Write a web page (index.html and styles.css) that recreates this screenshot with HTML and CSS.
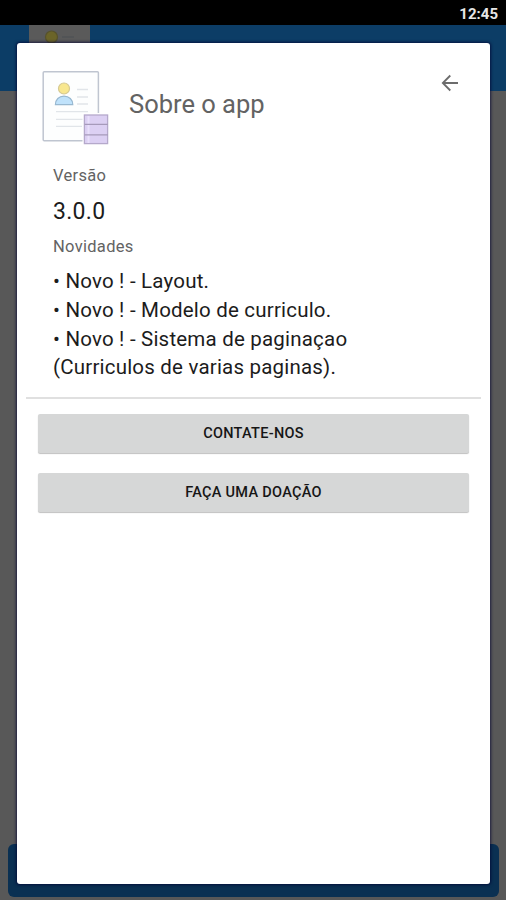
FILE: index.html
```html
<!DOCTYPE html>
<html lang="pt-BR">
    <head>
        <meta charset="utf-8">
        <title>Sobre o app</title>
        <link rel="stylesheet" href="styles.css">
    </head>
    <body>
        <svg class="symbols" width="0" height="0">
            <symbol id="resume" viewBox="0 0 68 76">
                <rect x="1.2" y="1.7" width="55.2" height="69" rx="1" fill="#fdfefe" stroke="#bfc5d0" stroke-width="1.5"/>
                <path d="M35 19.5h11M35 27h11M35 34h11M14 41.7h32M14 49.3h28M14 56.3h26" stroke="#e1e5e9" stroke-width="1.3"/>
                <circle cx="22" cy="18.5" r="5.5" fill="#f8e78f" stroke="#d5c993" stroke-width="1.2"/>
                <path d="M13.4 34.7c0-5 3.5-8.6 8.6-8.6s8.8 3.6 8.8 8.6z" fill="#bfe2fb" stroke="#98b8d0" stroke-width="1.2"/>
                <rect x="40.5" y="43" width="27" height="33" fill="#fff"/>
                <rect x="42.4" y="45" width="23.2" height="28.6" fill="#dcd0f3" stroke="#b5a9cb" stroke-width="1.3"/>
                <path d="M46.5 46v27" stroke="#e9e0fb" stroke-width="2"/>
                <path d="M42.6 54.3h23.2M42.6 64.8h23.2" stroke="#a69aba" stroke-width="1.3"/>
            </symbol>
        </svg>

        <div class="screen">
            <div class="status-bar">12:45</div>
            <header class="app-bar">
                <div class="app-bar-logo">
                    <svg class="app-bar-icon" viewBox="0 0 61 60">
                        <path d="M33 12h12" stroke="#505255" stroke-width="1.3"/>
                        <circle cx="22.5" cy="12" r="6" fill="#6b6428" stroke="#57522c" stroke-width="1.2"/>
                    </svg>
                </div>
            </header>
            <div class="content"></div>
            <footer class="footer"><div class="footer-button"></div></footer>

            <main class="dialog">
                <div class="dialog-header">
                    <svg class="logo"><use href="#resume"/></svg>
                    <h1 class="title">Sobre o app</h1>
                    <svg class="back" viewBox="0 0 18 18">
                        <path d="M17 9H2M9.3 1.5L1.8 9l7.5 7.5" fill="none" stroke="#6c6c6c" stroke-width="1.8"/>
                    </svg>
                </div>
                <div class="info">
                    <p class="label">Versão</p>
                    <p class="version">3.0.0</p>
                    <p class="label label-news">Novidades</p>
                    <p class="news">• Novo ! - Layout.<br>• Novo ! - Modelo de curriculo.<br>• Novo ! - Sistema de paginaçao<br>(Curriculos de varias paginas).</p>
                </div>
                <div class="actions">
                    <button class="button">CONTATE-NOS</button>
                    <button class="button">FAÇA UMA DOAÇÃO</button>
                </div>
            </main>
        </div>
    </body>
</html>
```

FILE: styles.css
```css
* {
    box-sizing: border-box;
}

body {
    margin: 0;
    font-family: Roboto, sans-serif;
}

h1, p {
    margin: 0;
    font-weight: normal;
    white-space: nowrap;
}

.symbols {
    position: absolute;
}

/* Screen behind the dialog */
.screen {
    position: relative;
    display: flex;
    flex-direction: column;
    height: 900px;
    overflow: hidden;
    background: #585858;
}

.status-bar {
    height: 25px;
    padding-right: 8px;
    background: #000;
    color: #e6e6e6;
    font-size: 15px;
    font-weight: 700;
    line-height: 28px;
    text-align: right;
}

.app-bar {
    height: 66px;
    padding-left: 29px;
    background: #0c3d66;
}

.app-bar-logo {
    width: 61px;
    height: 60px;
    background: #5a5a5a;
}

.app-bar-icon {
    display: block;
    width: 61px;
    height: 60px;
}

.content {
    flex: 1;
}

.footer {
    padding: 0 7px 3px 8px;
}

.footer-button {
    height: 53px;
    border-radius: 6px;
    background: #0a3052;
}

/* Dialog */
.dialog {
    position: absolute;
    top: 43px;
    left: 17px;
    width: 473px;
    height: 841px;
    border-radius: 3px;
    background: #fff;
    box-shadow: 0 0 3px 1px rgba(0, 0, 50, 0.7);
}

.dialog-header {
    display: flex;
    align-items: flex-start;
    height: 120px;
    padding: 27px 31px 0 25px;
}

.logo {
    width: 68px;
    height: 76px;
}

.title {
    flex: 1;
    margin-left: 19px;
    padding-top: 17px;
    color: #636363;
    font-size: 25.5px;
    line-height: 34px;
}

.back {
    width: 18px;
    height: 18px;
    margin-top: 4px;
}

.info {
    height: 236px;
    margin: 0 9px;
    padding-left: 27px;
    border-bottom: 2px solid #e0e0e0;
}

.label {
    color: #636363;
    font-size: 16.5px;
    line-height: 26px;
    letter-spacing: 0.3px;
}

.version {
    margin-top: 7px;
    color: #1c1c1c;
    font-size: 23px;
    line-height: 32px;
    letter-spacing: 0.3px;
}

.label-news {
    margin-top: 6px;
}

.news {
    margin-top: 7px;
    color: #1c1c1c;
    font-size: 20.5px;
    line-height: 28.8px;
    letter-spacing: 0.2px;
}

/* Buttons */
.actions {
    display: flex;
    flex-direction: column;
    gap: 20px;
    padding: 15px 21px 0;
}

.button {
    height: 39px;
    padding: 0;
    border: 0;
    border-radius: 2px;
    background: #d6d7d7;
    box-shadow: 0 1px 1px rgba(0, 0, 0, 0.25);
    color: #161616;
    font-family: inherit;
    font-size: 14.5px;
    font-weight: 500;
    letter-spacing: 0.3px;
}
```
